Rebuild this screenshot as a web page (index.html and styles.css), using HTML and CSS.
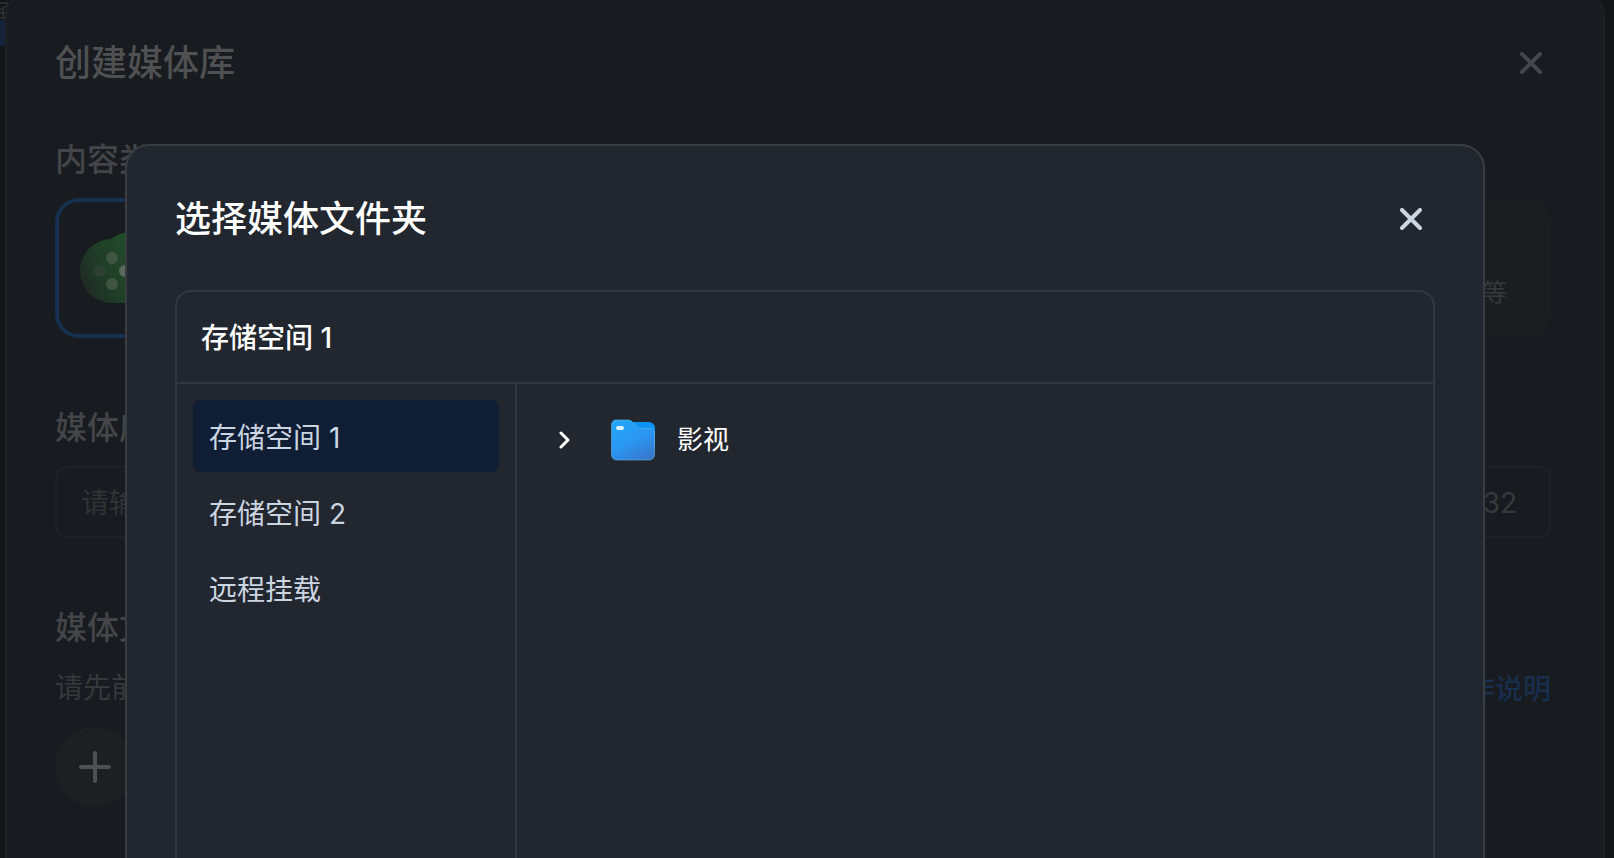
FILE: index.html
```html
<!DOCTYPE html>
<html lang="zh-CN">
<head>
  <meta charset="UTF-8">
  <meta name="viewport" content="width=device-width, initial-scale=1.0">
  <title>创建媒体库</title>
  <link rel="stylesheet" href="styles.css">
</head>
<body>
  <!-- 底层页面 -->
  <div class="page">
    <svg width="12" height="20" viewBox="0 0 12 20"><path d="M0 3H8M1 9L8 5M0 13H10M3 8V18M0 18H7"/></svg>
    <div class="page-active"></div>
  </div>

  <!-- 创建媒体库 -->
  <div class="library">
    <div class="library-header">
      <h1>创建媒体库</h1>
      <button class="close" type="button" aria-label="关闭">
        <svg width="22" height="22" viewBox="0 0 22 22"><path d="M2 2L20 20M20 2L2 20"/></svg>
      </button>
    </div>

    <h2>内容类型</h2>
    <div class="types">
      <button class="type active" type="button" aria-label="影视">
        <svg width="80" height="80" viewBox="0 0 80 80">
          <defs>
            <linearGradient id="reel" x1="0" y1="0.7" x2="1" y2="0.3">
              <stop offset="0" stop-color="#1f2a25"/>
              <stop offset="0.4" stop-color="#203f28"/>
              <stop offset="1" stop-color="#24502a"/>
            </linearGradient>
          </defs>
          <circle cx="52" cy="33" r="31" fill="#1f4d27"/>
          <path d="M33 9a32 32 0 0 0 0 64h40V41a32 32 0 0 0-40-32z" fill="url(#reel)"/>
          <circle cx="33" cy="28" r="6" fill="#3f5443"/>
          <circle cx="21" cy="41" r="6" fill="#2d4032"/>
          <circle cx="33" cy="54" r="6" fill="#3f5443"/>
          <circle cx="46" cy="41" r="6" fill="#5a675c"/>
        </svg>
      </button>
      <button class="type" type="button"><span>等</span></button>
    </div>

    <h2><label for="name">媒体库名称</label></h2>
    <div class="name-box">
      <input type="text" id="name" placeholder="请输入" maxlength="32">
      <span>0/32</span>
    </div>

    <h2>媒体文件夹</h2>
    <div class="tip">
      <span>请先前往</span>
      <a href="#">操作说明</a>
    </div>
    <button class="add" type="button" aria-label="添加">
      <svg width="32" height="32" viewBox="0 0 32 32"><path d="M16 2V30M2 16H30"/></svg>
    </button>
  </div>

  <!-- 选择媒体文件夹 -->
  <div class="picker" role="dialog" aria-labelledby="picker-title">
    <div class="picker-header">
      <h1 id="picker-title">选择媒体文件夹</h1>
      <button class="close" type="button" aria-label="关闭">
        <svg width="22" height="22" viewBox="0 0 22 22"><path d="M2 2L20 20M20 2L2 20"/></svg>
      </button>
    </div>
    <div class="browser">
      <div class="path">存储空间 1</div>
      <div class="browser-main">
        <div class="spaces">
          <button class="space active" type="button">存储空间 1</button>
          <button class="space" type="button">存储空间 2</button>
          <button class="space" type="button">远程挂载</button>
        </div>
        <div class="files">
          <div class="file">
            <button class="expand" type="button" aria-label="展开">
              <svg width="12" height="18" viewBox="0 0 12 18"><path d="M2 2L9 9L2 16"/></svg>
            </button>
            <svg class="folder" width="44" height="42" viewBox="0 0 44 42">
              <defs>
                <linearGradient id="front" x1="0.2" y1="0" x2="0.8" y2="1">
                  <stop offset="0" stop-color="#22a6f8"/>
                  <stop offset="0.5" stop-color="#2b97f3"/>
                  <stop offset="1" stop-color="#3777cc"/>
                </linearGradient>
              </defs>
              <path d="M18 3H38a6 6 0 0 1 6 6V30H18z" fill="#0d93f5"/>
              <path d="M5 1H17.500q2 0 3.500 1.500L26 8q1.500 1.500 4 1.500H39a4.500 4.500 0 0 1 4.500 4.500V36a5 5 0 0 1-5 5H5.500a5 5 0 0 1-5-5V5.500A4.500 4.500 0 0 1 5 1z" fill="url(#front)" stroke="#5fb4e8" stroke-opacity="0.6"/>
              <rect x="5" y="7" width="8" height="4" rx="2" fill="#d8f0ff"/>
            </svg>
            <span>影视</span>
          </div>
        </div>
      </div>
    </div>
  </div>
</body>
</html>
```

FILE: styles.css
```css
*{
  box-sizing: border-box;
}
body{
  margin: 0;
  height: 100vh;
  overflow: hidden;
  position: relative;
  background: #121619;
  color: #fff;
  font-family: Inter, "Noto Sans CJK SC", sans-serif;
  font-size: 28px;
}
h1, h2{
  margin: 0;
  font-weight: 500;
}
h1{
  font-size: 36px;
  line-height: 50px;
}
h2{
  font-size: 32px;
  line-height: 42px;
}
button{
  padding: 0;
  border: none;
  background: none;
  color: inherit;
  font: inherit;
  cursor: pointer;
}
svg{
  display: block;
  fill: none;
  stroke-linecap: round;
  stroke-linejoin: round;
}
.close{
  padding: 13px;
  stroke: #cbd5e1;
  stroke-width: 4;
}

/* 底层页面 */
.page{
  position: absolute;
  top: 0;
  left: 0;
  width: 12px;
  stroke: #2a2e31;
  stroke-width: 2;
}
.page-active{
  height: 26px;
  background: #14243a;
}

/* 创建媒体库 */
.library{
  position: absolute;
  top: -8px;
  bottom: -40px;
  left: 5px;
  right: 9px;
  padding: 44px 52px 0 48px;
  border: 2px solid #1e2124;
  border-radius: 24px;
  background: #181b1f;
  color: #434548;
}
.library-header,
.picker-header{
  display: flex;
  align-items: center;
  justify-content: space-between;
  height: 50px;
}
.library-header{
  margin: 0 -4px 51px 0;
  color: #4f5051;
}
.library .close{
  stroke: #44474b;
}
.types{
  display: grid;
  grid-template-columns: 1fr 1fr;
  gap: 24px;
  margin: 17px 0 69px;
}
.type{
  display: flex;
  align-items: center;
  height: 140px;
  padding: 4px 20px 0;
  border: 4px solid #1b1e21;
  border-radius: 24px;
  background: #1b1e21;
}
.type.active{
  border-color: #17304f;
  background: #181b1f;
}
.type span{
  margin: 40px 20px 0 auto;
  font-size: 24px;
  color: #36393c;
}
.name-box{
  display: flex;
  align-items: center;
  height: 72px;
  margin: 17px 0 69px;
  padding: 2px 32px 0 24px;
  border: 2px solid #1f2225;
  border-radius: 12px;
  color: #36393c;
}
.name-box input{
  flex: 1;
  padding: 0;
  border: none;
  outline: none;
  background: none;
  color: inherit;
  font: inherit;
}
.name-box input::placeholder{
  color: #303336;
}
.tip{
  display: flex;
  justify-content: space-between;
  margin: 18px 0 17px;
  line-height: 42px;
  color: #36393c;
}
.tip a{
  padding-top: 1px;
  color: #172e4d;
  font-weight: 500;
  text-decoration: none;
}
.add{
  display: flex;
  align-items: center;
  justify-content: center;
  width: 80px;
  height: 80px;
  border-radius: 50%;
  background: #1c2022;
  stroke: #4f5051;
  stroke-width: 4;
}

/* 选择媒体文件夹 */
.picker{
  position: absolute;
  top: 144px;
  bottom: -40px;
  left: 125px;
  right: 129px;
  display: flex;
  flex-direction: column;
  padding: 48px 48px 0;
  border: 2px solid #3a3d40;
  border-radius: 24px;
  background: #22262e;
}
.picker-header{
  margin-bottom: 46px;
}
.browser{
  flex: 1;
  display: flex;
  flex-direction: column;
  border: 2px solid #34373d;
  border-radius: 16px;
}
.path{
  padding: 2px 24px 0;
  border-bottom: 2px solid #34373d;
  line-height: 88px;
  font-weight: 500;
}
.browser-main{
  flex: 1;
  display: flex;
}
.spaces{
  display: flex;
  flex-direction: column;
  gap: 4px;
  width: 340px;
  padding: 16px;
  border-right: 2px solid #34373d;
}
.space{
  height: 72px;
  padding: 0 16px;
  border-radius: 8px;
  color: #cbd5e1;
  text-align: left;
}
.space.active{
  background: #0f1e34;
}
.files{
  flex: 1;
  padding: 20px 42px;
}
.file{
  display: flex;
  align-items: center;
  height: 72px;
  font-size: 26px;
  line-height: 36px;
}
.expand{
  stroke: #fff;
  stroke-width: 3;
}
.folder{
  margin: 0 22px 0 40px;
}
```
